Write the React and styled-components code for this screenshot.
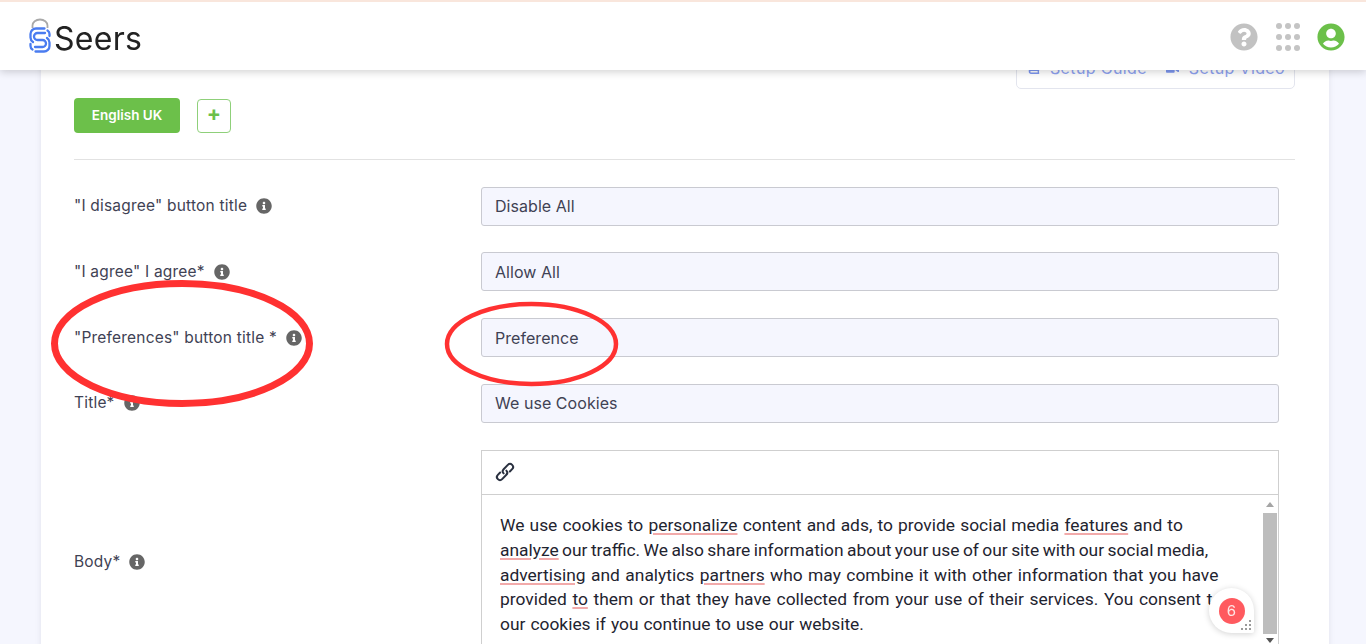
import React from "react";
import styled, { createGlobalStyle } from "styled-components";
import { FaQuestionCircle, FaUserCircle, FaInfoCircle, FaBook, FaVideo } from "react-icons/fa";

const Global = createGlobalStyle`
  html, body {
    margin: 0;
    height: 644px;
    overflow: hidden;
    background: #f5f6fe;
    font-family: "Inter", "Liberation Sans", sans-serif;
  }
  * { box-sizing: border-box; }
`;

const Header = styled.header`
  position: fixed;
  top: 0;
  left: 0;
  right: 0;
  height: 70px;
  z-index: 5;
  display: flex;
  align-items: center;
  justify-content: space-between;
  padding: 0 21px 0 29px;
  background: #fff;
  border-top: 2px solid #f9e6dc;
  box-shadow: 0 2px 8px rgba(0, 0, 0, 0.18);
`;

const Brand = styled.div`
  display: flex;
  align-items: center;
  gap: 3px;
`;

const BrandName = styled.span`
  font-size: 32px;
  line-height: 40px;
  letter-spacing: 0.3px;
  color: #222;
  margin-top: 5px;
`;

const HeaderIcons = styled.div`
  display: flex;
  align-items: center;
  gap: 17px;
  margin-top: 2px;
`;

const DotGrid = styled.div`
  display: grid;
  grid-template-columns: repeat(3, 6px);
  column-gap: 3px;
  row-gap: 5px;
  margin-left: 1px;
`;

const Dot = styled.span`
  width: 6px;
  height: 6px;
  border-radius: 50%;
  background: #c4c4c4;
`;

const Main = styled.main`
  padding: 49px 37px 0 41px;
`;

const Card = styled.section`
  height: 700px;
  background: #fff;
  padding: 0 34px 0 33px;
  box-shadow: 0 0 6px rgba(60, 60, 90, 0.1);
`;

const SetupBox = styled.div`
  width: 279px;
  height: 40px;
  margin-left: auto;
  display: flex;
  align-items: flex-end;
  gap: 19px;
  padding: 0 9px 11px 11px;
  border: 1px solid #e3e5ee;
  border-radius: 5px;
`;

const SetupLink = styled.span`
  display: flex;
  align-items: center;
  gap: 10px;
  font-size: 16px;
  line-height: 18px;
  letter-spacing: 0.35px;
  color: #8ea2f0;
  white-space: nowrap;
`;

const LangRow = styled.div`
  display: flex;
  align-items: center;
  gap: 17px;
  margin-top: 9px;
  padding-bottom: 26px;
  border-bottom: 1px solid #e2e2e2;
`;

const LangButton = styled.button`
  width: 106px;
  height: 35px;
  border: 0;
  border-radius: 4px;
  padding: 0 0 2px;
  background: #6cc04a;
  color: #fff;
  font: 600 13.5px "Inter", sans-serif;
`;

const AddButton = styled.button`
  width: 34px;
  height: 34px;
  display: flex;
  align-items: center;
  justify-content: center;
  border: 1px solid #8fd07a;
  border-radius: 4px;
  background: #fff;
  color: #6cc04a;
  font: 700 21px/1 "Inter", sans-serif;
  padding: 0 0 4px;
`;

const Form = styled.div`
  display: flex;
  flex-direction: column;
  gap: 26.75px;
  padding-top: 26.6px;
`;

const Row = styled.div`
  display: grid;
  grid-template-columns: 407px 798px;
  align-items: center;
`;

const Label = styled.label`
  display: flex;
  align-items: center;
  gap: 9px;
  color: #3f4254;
  font-size: 15.5px;
  letter-spacing: 0.2px;
  line-height: 20px;
  margin-top: ${(p) => p.$shift || 0}px;
`;

const Info = styled(FaInfoCircle)`
  color: #666;
  font-size: 16px;
`;

const Field = styled.div`
  height: 39px;
  padding: 0 13px;
  display: flex;
  align-items: center;
  background: #f5f6fe;
  border: 1px solid #c9cad1;
  border-radius: 3px;
  color: #3f4254;
  font-size: 16px;
  letter-spacing: 0.05px;
`;

const Editor = styled.div`
  border: 1px solid #cfcfcf;
  border-bottom: 0;
  height: 220px;
  background: #fff;
`;

const Toolbar = styled.div`
  height: 44px;
  display: flex;
  align-items: center;
  padding-left: 12px;
  border-bottom: 1px solid #cfcfcf;
  color: #2a3140;
`;

const EditorBody = styled.div`
  display: grid;
  grid-template-columns: 1fr 17px;
  height: 176px;
`;

const EditorText = styled.div`
  padding: 18.4px 0 0 18px;
  font-family: "Roboto", "Noto Sans", sans-serif;
  font-size: 17.4px;
  line-height: 24.8px;
  color: #1f2430;
`;

const Line = styled.div`
  white-space: nowrap;
  word-spacing: ${(p) => p.$spread || 0}px;
`;

const Spell = styled.span`
  text-decoration: underline;
  text-decoration-color: #f2aaaa;
  text-decoration-thickness: 2px;
  text-underline-offset: 2px;
`;

const Scrollbar = styled.div`
  display: flex;
  flex-direction: column;
  align-items: center;
  padding-top: 7px;
  background: #fff;
`;

const ScrollUp = styled.span`
  width: 0;
  height: 0;
  border: 4px solid transparent;
  border-top: 0;
  border-bottom: 5px solid #a5a5a5;
`;

const ScrollThumb = styled.div`
  width: 14px;
  height: 121px;
  margin-top: 6px;
  background: #bdbdbd;
`;

const ScrollDown = styled.span`
  width: 0;
  height: 0;
  margin-top: 4px;
  border: 4px solid transparent;
  border-bottom: 0;
  border-top: 5px solid #555;
`;

const Annotation = styled.svg`
  position: fixed;
  top: 0;
  left: 0;
  z-index: 4;
  pointer-events: none;
`;

const ChatBubble = styled.div`
  position: fixed;
  left: 1209px;
  top: 588px;
  width: 45px;
  height: 45px;
  z-index: 4;
  display: flex;
  align-items: center;
  justify-content: center;
  background: #fff;
  border-radius: 50% 50% 2px 50%;
  box-shadow: 0 1px 6px rgba(0, 0, 0, 0.18);
`;

const ChatCount = styled.span`
  width: 26px;
  height: 26px;
  border-radius: 50%;
  background: #ff5a5f;
  color: #ffe6e6;
  font-size: 15px;
  line-height: 26px;
  text-align: center;
`;

const Grip = styled.svg`
  position: absolute;
  right: 2px;
  bottom: 2px;
`;

const fields = [
  { label: '"I disagree" button title', value: "Disable All" },
  { label: '"I agree" I agree*', value: "Allow All" },
  { label: '"Preferences" button title *', value: "Preference" },
  { label: "Title*", value: "We use Cookies" },
];

const SeersMark = () => (
  <svg width="22" height="36" viewBox="0 0 22 36" fill="none" style={{ marginTop: -1 }}>
    <path d="M3.5 10V7.5a7.5 6 0 0 1 15 0V10" stroke="#a9a9a9" strokeWidth="1.8" />
    <g stroke="#4a7cf0" strokeWidth="2.3" strokeLinecap="round" strokeLinejoin="round">
      <path d="M15.5 10.5H7a5.5 5.5 0 0 0-5.5 5.5v3.5A5.5 5.5 0 0 0 4 24" />
      <path d="M6.5 33.5H15a5.5 5.5 0 0 0 5.5-5.5v-3.5A5.5 5.5 0 0 0 18 20" />
      <path d="M16 15H8.5a3.5 3.5 0 0 0 0 7h5a3.5 3.5 0 0 1 0 7H6" />
      <path d="M18.5 12.5a4 4 0 0 1 2 3.5v2" />
      <path d="M3.5 31.5a4 4 0 0 1-2-3.5v-2" />
    </g>
  </svg>
);

const ChainIcon = () => (
  <svg width="22" height="22" viewBox="0 0 24 24" fill="none" stroke="currentColor" strokeWidth="2.2" strokeLinecap="round" strokeLinejoin="round">
    <path d="M10.5 13.5a3.2 3.2 0 0 1 0-4.5l4.6-4.8a3.3 3.3 0 0 1 4.7 4.7L17.3 11.4" />
    <path d="M13.5 10.5a3.2 3.2 0 0 1 0 4.5l-4.6 4.8a3.3 3.3 0 0 1-4.7-4.7L6.7 12.6" />
  </svg>
);

export default function App() {
  return (
    <>
      <Global />
      <Header>
        <Brand>
          <SeersMark />
          <BrandName>Seers</BrandName>
        </Brand>
        <HeaderIcons>
          <FaQuestionCircle size={28} color="#c2c2c2" />
          <DotGrid>
            {Array.from({ length: 9 }).map((_, i) => (
              <Dot key={i} />
            ))}
          </DotGrid>
          <FaUserCircle size={28} color="#6cc04a" />
        </HeaderIcons>
      </Header>

      <Main>
        <Card>
          <SetupBox>
            <SetupLink>
              <FaBook size={12} color="#7d96ef" />
              Setup Guide
            </SetupLink>
            <SetupLink>
              <FaVideo size={13} color="#7d96ef" />
              Setup Video
            </SetupLink>
          </SetupBox>

          <LangRow>
            <LangButton>English UK</LangButton>
            <AddButton>+</AddButton>
          </LangRow>

          <Form>
            {fields.map((f) => (
              <Row key={f.label}>
                <Label>
                  {f.label}
                  <Info />
                </Label>
                <Field>{f.value}</Field>
              </Row>
            ))}
            <Row>
              <Label $shift={4}>
                Body*
                <Info />
              </Label>
              <Editor>
                <Toolbar>
                  <ChainIcon />
                </Toolbar>
                <EditorBody>
                  <EditorText>
                    <Line $spread={0.85}>
                      We use cookies to <Spell>personalize</Spell> content and ads, to provide social media{" "}
                      <Spell>features</Spell> and to
                    </Line>
                    <Line $spread={-0.9}>
                      <Spell>analyze</Spell> our traffic. We also share information about your use of our site with our
                      social media,
                    </Line>
                    <Line $spread={1.1}>
                      <Spell>advertising</Spell> and analytics <Spell>partners</Spell> who may combine it with other
                      information that you have
                    </Line>
                    <Line $spread={1.3}>
                      provided <Spell>to</Spell> them or that they have collected from your use of their services. You
                      consent to
                    </Line>
                    <Line $spread={0.7}>our cookies if you continue to use our website.</Line>
                  </EditorText>
                  <Scrollbar>
                    <ScrollUp />
                    <ScrollThumb />
                    <ScrollDown />
                  </Scrollbar>
                </EditorBody>
              </Editor>
            </Row>
          </Form>
        </Card>
      </Main>

      <Annotation width="1366" height="644">
        <ellipse cx="182" cy="343.5" rx="127.5" ry="60" fill="none" stroke="#ff3131" strokeWidth="7" />
        <ellipse cx="531.5" cy="344" rx="84.5" ry="40" fill="none" stroke="#ff3131" strokeWidth="4.5" />
      </Annotation>

      <ChatBubble>
        <ChatCount>6</ChatCount>
        <Grip width="12" height="12" viewBox="0 0 12 12" fill="#9a9a9a">
          <rect x="9" y="1" width="2" height="2" />
          <rect x="5" y="5" width="2" height="2" />
          <rect x="9" y="5" width="2" height="2" />
          <rect x="1" y="9" width="2" height="2" />
          <rect x="5" y="9" width="2" height="2" />
          <rect x="9" y="9" width="2" height="2" />
        </Grip>
      </ChatBubble>
    </>
  );
}
